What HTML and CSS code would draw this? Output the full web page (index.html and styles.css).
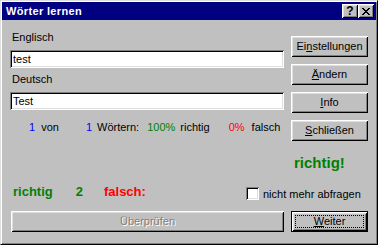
FILE: index.html
```html
<!DOCTYPE html>
<html lang="de">
<head>
  <meta charset="UTF-8" />
  <title>Wörter lernen</title>
  <link rel="stylesheet" href="styles.css">
</head>
<body>
  <div class="window">
    <div class="titlebar">
      <span class="title">Wörter lernen</span>
      <div class="caption-buttons">
        <button class="caption-btn">?</button>
        <button class="caption-btn">
          <svg width="8" height="7" viewBox="0 0 8 7" shape-rendering="crispEdges">
            <path d="M0 0h2v1H0z M6 0h2v1H6z M1 1h2v1H1z M5 1h2v1H5z M2 2h4v1H2z M3 3h2v1H3z M2 4h4v1H2z M1 5h2v1H1z M5 5h2v1H5z M0 6h2v1H0z M6 6h2v1H6z" fill="#000"/>
          </svg>
        </button>
      </div>
    </div>

    <div class="dialog">
      <div class="main">
        <div class="fields">
          <label class="field-label" for="englisch">Englisch</label>
          <input class="field" type="text" id="englisch" value="test" />

          <label class="field-label deutsch" for="deutsch">Deutsch</label>
          <input class="field" type="text" id="deutsch" value="Test" />

          <div class="stats">
            <span class="num n1">1</span>
            <span class="von">von</span>
            <span class="num n2">1</span>
            <span class="woerter">Wörtern:</span>
            <span class="pct-ok">100%</span>
            <span class="lbl-ok">richtig</span>
            <span class="pct-bad">0%</span>
            <span class="lbl-bad">falsch</span>
          </div>
        </div>

        <div class="actions">
          <button class="btn">Ei<u>n</u>stellungen</button>
          <button class="btn"><u>Ä</u>ndern</button>
          <button class="btn"><u>I</u>nfo</button>
          <button class="btn"><u>S</u>chließen</button>
          <div class="verdict">richtig!</div>
        </div>
      </div>

      <div class="score-row">
        <div class="score">
          <span class="score-ok">richtig</span>
          <span class="score-ok score-num">2</span>
          <span class="score-bad">falsch:</span>
        </div>
        <label class="check">
          <span class="checkbox"></span>
          <span class="check-text">nicht mehr abfragen</span>
        </label>
      </div>

      <div class="bottom-row">
        <button class="btn wide" disabled>Überprüfen</button>
        <button class="btn default"><u>W</u>eiter</button>
      </div>
    </div>
  </div>
</body>
</html>
```

FILE: styles.css
```css
* { box-sizing: border-box; }
body { margin: 0; background: #c0c0c0; font-family: "Liberation Sans", Arial, sans-serif; font-size: 11px; color: #000; }

.window { width: 378px; height: 245px; background: #c0c0c0; padding: 1px; border: 1px solid; border-color: #dfdfdf #000 #000 #dfdfdf; box-shadow: inset 1px 1px #fff, inset -1px -1px #808080; }

.titlebar { height: 18px; background: #000080; color: #fff; display: flex; align-items: center; justify-content: space-between; padding: 0 2px 0 4px; }
.title { font-weight: bold; letter-spacing: 0.35px; line-height: 13px; padding-top: 1px; }
.caption-buttons { display: flex; gap: 0; }
.caption-btn { width: 16px; height: 14px; padding: 0; border: 0; background: #c0c0c0; display: flex; align-items: center; justify-content: center; font: bold 12px "Liberation Sans", Arial, sans-serif; color: #000; box-shadow: inset 1px 1px #fff, inset -1px -1px #000, inset 2px 2px #dfdfdf, inset -2px -2px #808080; }

.dialog { padding: 0 8px; }
.main { display: flex; gap: 7px; height: 151px; }

.fields { width: 274px; padding-top: 11px; }
.field-label { display: block; line-height: 13px; padding-left: 2px; }
.field-label.deutsch { margin-top: 5px; }
.field { display: block; width: 274px; height: 18px; margin-top: 6px; padding: 0 3px; border: 0; outline: none; background: #fff; font: 11px "Liberation Sans", Arial, sans-serif; color: #000; box-shadow: inset 1px 1px #808080, inset -1px -1px #fff, inset 2px 2px #000, inset -2px -2px #dfdfdf; }

.stats { display: flex; margin-top: 11px; line-height: 13px; }
.stats .num { color: #0000ff; }
.stats .n1 { margin-left: 19px; }
.stats .von { margin-left: 6px; }
.stats .n2 { margin-left: 27px; }
.stats .woerter { margin-left: 5px; }
.stats .pct-ok { margin-left: 8px; color: #008000; }
.stats .lbl-ok { margin-left: 5px; }
.stats .pct-bad { margin-left: 19px; color: #ff0000; }
.stats .lbl-bad { margin-left: 7px; }

.actions { width: 77px; padding-top: 16px; display: flex; flex-direction: column; gap: 7px; }
.verdict { margin-top: 6px; padding-left: 3px; font-size: 15px; font-weight: bold; line-height: 17px; color: #008000; }

.btn { width: 77px; height: 21px; padding: 0; border: 0; background: #c0c0c0; font: 11px "Liberation Sans", Arial, sans-serif; line-height: 13px; color: #000; box-shadow: inset 1px 1px #fff, inset -1px -1px #000, inset 2px 2px #dfdfdf, inset -2px -2px #808080; }
.btn.wide { width: 273px; margin-left: 1px; }
.btn:disabled { color: #808080; text-shadow: 1px 1px #fff; }
.btn.default { border: 1px solid #000; outline: 1px dotted #000; outline-offset: -5px; }

.score-row { display: grid; grid-template-columns: 236px 1fr; margin-top: 13px; height: 16px; }
.score { display: flex; padding-left: 3px; font-size: 13px; font-weight: bold; line-height: 16px; }
.score-ok { color: #008000; }
.score-num { margin-left: 23px; }
.score-bad { margin-left: 21px; color: #ff0000; }

.check { display: flex; align-items: flex-start; }
.checkbox { width: 13px; height: 13px; margin-top: 3px; margin-right: 4px; background: #fff; box-shadow: inset 1px 1px #808080, inset -1px -1px #fff, inset 2px 2px #000, inset -2px -2px #dfdfdf; }
.check-text { margin-top: 4px; line-height: 13px; }

.bottom-row { display: flex; justify-content: space-between; margin-top: 11px; }
```
